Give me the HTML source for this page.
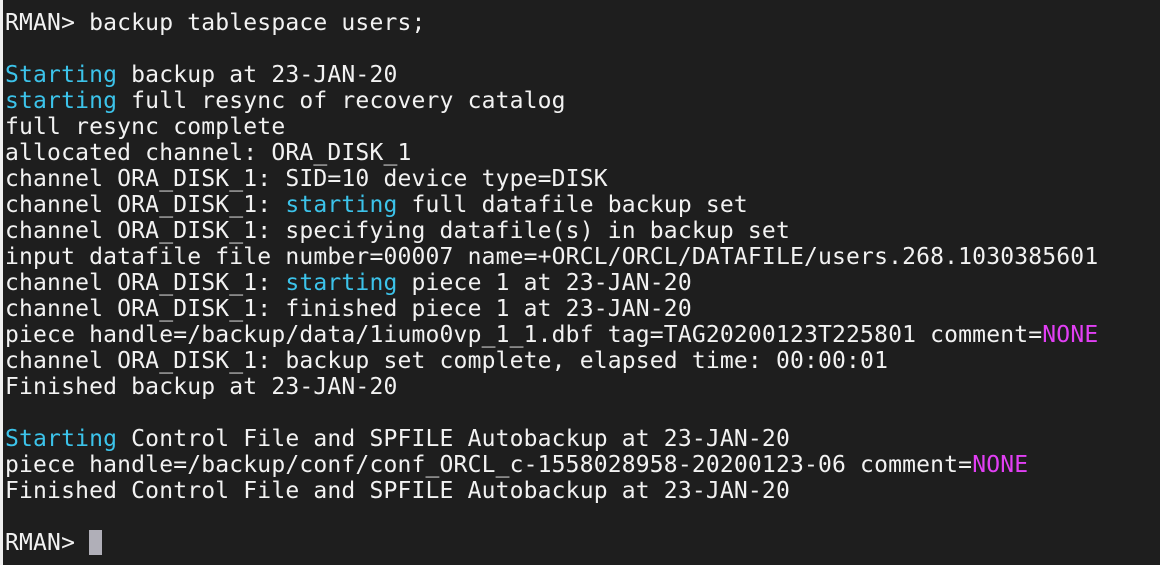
<!DOCTYPE html>
<html><head><style>
html,body{margin:0;padding:0;background:#1e1e1e;width:1160px;height:565px;overflow:hidden}
body{border-left:3px solid #f0f0f0;box-sizing:border-box}
pre{margin:0;position:absolute;left:5px;top:10px;font-family:"DejaVu Sans Mono","Liberation Mono",monospace;font-size:23px;line-height:26px;color:#f2f2f2;letter-spacing:0.17px}
.c{color:#3cc3ea}.m{color:#e23ff5}
.cur{display:inline-block;width:13px;height:25px;background:#b0afb8;vertical-align:-5px}
</style></head><body><pre>RMAN&gt; backup tablespace users;

<span class="c">Starting</span> backup at 23-JAN-20
<span class="c">starting</span> full resync of recovery catalog
full resync complete
allocated channel: ORA_DISK_1
channel ORA_DISK_1: SID=10 device type=DISK
channel ORA_DISK_1: <span class="c">starting</span> full datafile backup set
channel ORA_DISK_1: specifying datafile(s) in backup set
input datafile file number=00007 name=+ORCL/ORCL/DATAFILE/users.268.1030385601
channel ORA_DISK_1: <span class="c">starting</span> piece 1 at 23-JAN-20
channel ORA_DISK_1: finished piece 1 at 23-JAN-20
piece handle=/backup/data/1iumo0vp_1_1.dbf tag=TAG20200123T225801 comment=<span class="m">NONE</span>
channel ORA_DISK_1: backup set complete, elapsed time: 00:00:01
Finished backup at 23-JAN-20

<span class="c">Starting</span> Control File and SPFILE Autobackup at 23-JAN-20
piece handle=/backup/conf/conf_ORCL_c-1558028958-20200123-06 comment=<span class="m">NONE</span>
Finished Control File and SPFILE Autobackup at 23-JAN-20

RMAN&gt; <span class="cur"></span></pre></body></html>
